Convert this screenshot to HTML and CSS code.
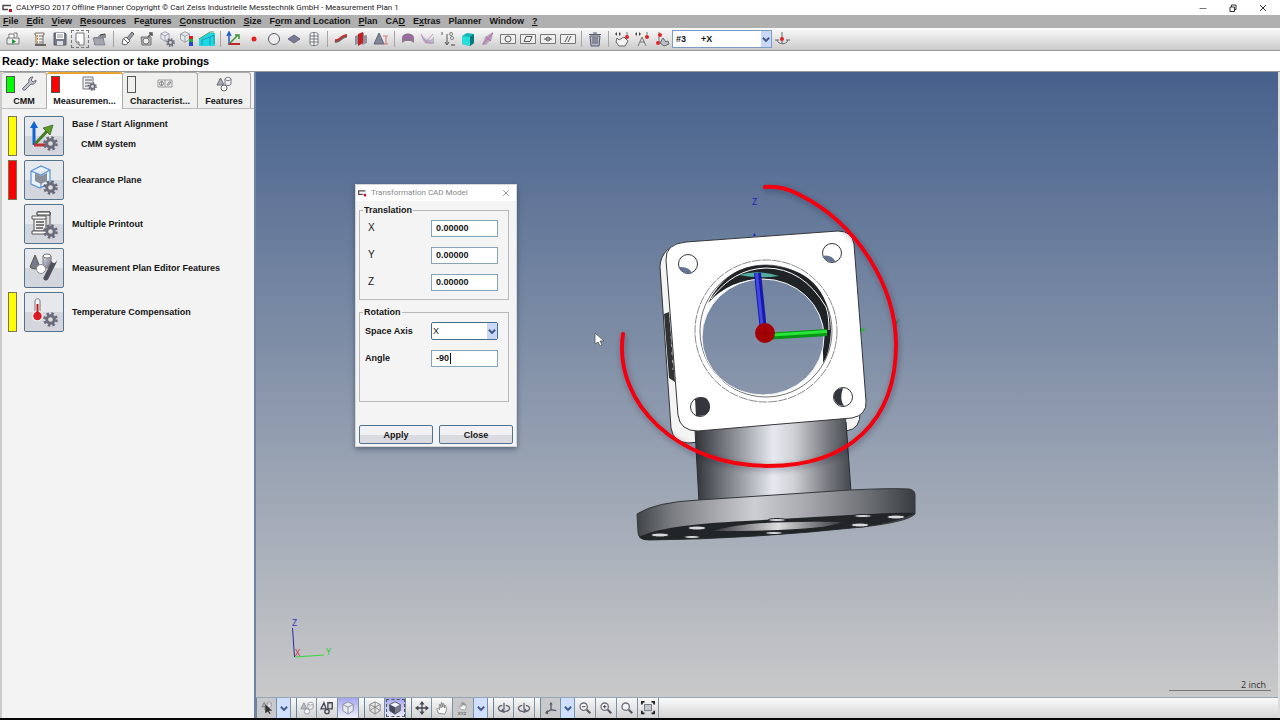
FILE: index.html
```html
<!DOCTYPE html>
<html lang="en">
<head>
<meta charset="utf-8">
<title>CALYPSO 2017 Offline Planner</title>
<link rel="stylesheet" href="styles.css">
</head>
<body>
<svg class="defs" aria-hidden="true">
  <defs>
    <linearGradient id="steel" x1="0" y1="0" x2="1" y2="1"><stop offset="0" stop-color="#dfe1ea"/><stop offset="1" stop-color="#686b7b"/></linearGradient>
    <symbol id="gear" viewBox="0 0 16 16"><circle cx="8" cy="8" r="6.300000" fill="none" stroke="#676a78" stroke-width="3" stroke-dasharray="2.6 2.35"/><circle cx="8" cy="8" r="4" fill="#ddd" stroke="#696c7b" stroke-width="3"/></symbol>
    <symbol id="shapes" viewBox="0 0 16 16"><path d="M4.500000 2L1 9h7z" fill="#a9acb8" stroke="#696b76"/><path d="M9 3v5c0 2 6 2 6 0V3" fill="#eee" stroke="#777a85"/><ellipse cx="12" cy="3" rx="3" ry="1.500000" fill="#fff" stroke="#777a85"/><circle cx="8" cy="12" r="3" fill="#fff" stroke="#666975"/></symbol>
    <symbol id="cube" viewBox="0 0 16 16"><path d="M8 1l6 3v7l-6 4-6-4V4z" fill="#e9e9f0" stroke="#858999"/><path d="M2 4l6 3 6-3M8 7v8" fill="none" stroke="#858999"/></symbol>
    <symbol id="solid" viewBox="0 0 16 16"><path d="M8 1l6 3-6 3-6-3z" fill="#f1f1f8"/><path d="M2 4l6 3v8l-6-4z" fill="#454957"/><path d="M14 4L8 7v8l6-4z" fill="#777b89"/><path d="M8 1l6 3v7l-6 4-6-4V4z" fill="none" stroke="#4a4d59"/></symbol>
    <symbol id="hand" viewBox="0 0 16 16"><path d="M4 14L2 9l1-1 2 2V4h1l1 4V2h1l1 5V3h1l1 5V5h1l1 3v3l-2 4z" fill="#f8f8f8" stroke="#777" stroke-width=".9"/></symbol>
    <symbol id="lens" viewBox="0 0 16 16"><circle cx="6.500000" cy="6.500000" r="4.200000" fill="#f5f5f9" stroke="#70717d" stroke-width="1.500000"/><path d="M10 10l4 4" stroke="#565762" stroke-width="2.500000"/></symbol>
    <symbol id="chev" viewBox="0 0 8 8"><path d="M1.500000 3L4 5.500000 6.500000 3" fill="none" stroke="#3c5488" stroke-width="1.500000"/></symbol>
    <symbol id="logo" viewBox="0 0 12 8"><path d="M10 1.500000H2v4h5" fill="none" stroke="#55454a" stroke-width="1.500000"/><rect x="8" y="5" width="3" height="3" fill="#c0102c"/></symbol>
  </defs>
</svg>

<header class="titlebar">
  <svg class="logo"><use href="#logo"/></svg>
  <h1 class="title">CALYPSO 2017 Offline Planner Copyright © Carl Zeiss Industrielle Messtechnik GmbH - Measurement Plan 1</h1>
  <div class="window-controls">
    <button class="plain" aria-label="Minimize"><svg viewBox="0 0 10 10"><path d="M1.500000 5.500000h7" stroke="#777"/></svg></button>
    <button class="plain" aria-label="Restore"><svg viewBox="0 0 10 10"><path d="M2 4h4.500000v4.500000H2zM3.500000 4V2H8v4.500000H6.500000" fill="none" stroke="#333"/></svg></button>
    <button class="plain" aria-label="Close window"><svg viewBox="0 0 10 10"><path d="M2 2l6 6M8 2L2 8" stroke="#333"/></svg></button>
  </div>
</header>

<nav class="menubar">
  <button class="plain menu"><u>F</u>ile</button><button class="plain menu"><u>E</u>dit</button><button class="plain menu"><u>V</u>iew</button><button class="plain menu"><u>R</u>esources</button><button class="plain menu">Fe<u>a</u>tures</button><button class="plain menu"><u>C</u>onstruction</button><button class="plain menu"><u>S</u>ize</button><button class="plain menu">F<u>o</u>rm and Location</button><button class="plain menu"><u>P</u>lan</button><button class="plain menu">CA<u>D</u></button><button class="plain menu">E<u>x</u>tras</button><button class="plain menu">Planner</button><button class="plain menu">Window</button><button class="plain menu"><u>?</u></button>
</nav>

<div class="toolbar">
  <button class="plain tool" aria-label="Run"><svg viewBox="0 0 16 16"><path d="M4 7V3h5v4M9 2h3v4" fill="#fff" stroke="#777"/><path d="M2 7h12v6H2z" fill="#eee" stroke="#777"/><path d="M7 8l4 2.500000L7 13z" fill="#159a2b"/></svg></button>
  <span class="sep blank"></span>
  <button class="plain tool" aria-label="Measurement plan"><svg viewBox="0 0 16 16"><path d="M3 2h9v2h-1v9H4V4H3z" fill="#f6f2ea" stroke="#76706c"/><path d="M3 14h11" stroke="#666" stroke-width="2"/><path d="M5 5h1M5 8h1M5 11h1" stroke="#e9861d" stroke-width="2"/><path d="M7 5h4M7 8h4M7 11h4" stroke="#777"/></svg></button>
  <button class="plain tool" aria-label="Save"><svg viewBox="0 0 16 16"><path d="M2 2h11l1 1v11H2z" fill="#74788b" stroke="#555969"/><path d="M4 2h8v6H4z" fill="#fafafa"/><path d="M5 4h6M5 6h6" stroke="#999"/><path d="M5 10h6v4H5z" fill="#ddd"/></svg></button>
  <button class="plain tool focus" aria-label="New"><svg viewBox="0 0 16 16"><path d="M4 2h8v12H7l-3-3z" fill="#fff" stroke="#777"/><path d="M4 11h3v3" fill="#ccc" stroke="#777"/></svg></button>
  <button class="plain tool" aria-label="Open"><svg viewBox="0 0 16 16"><path d="M2 6h4l1-2h5v10H2z" fill="#8c8f9a"/><path d="M1 7h10l2 7H3z" fill="#a2a5b0" stroke="#777a84" stroke-width=".7"/><path d="M8 4l5-1v4" fill="none" stroke="#333"/></svg></button>
  <span class="sep"></span>
  <button class="plain tool" aria-label="Probe"><svg viewBox="0 0 16 16"><path d="M8 7l5-6 2 2-5 6" fill="#a2a4ac" stroke="#5a5b64"/><path d="M4 8l3-2 4 4-4 4-4-1z" fill="#f7f7f7" stroke="#64666f"/><path d="M5 8l4 4" stroke="#666"/></svg></button>
  <button class="plain tool" aria-label="Folder probe"><svg viewBox="0 0 16 16"><path d="M2 6h10v8H3z" fill="#b0b1b9" stroke="#777"/><path d="M9 6l4-4M10 2h3v3" fill="none" stroke="#555" stroke-width="1.500000"/><circle cx="7" cy="10" r="3" fill="#eee" stroke="#777"/></svg></button>
  <button class="plain tool" aria-label="CAD settings"><svg viewBox="0 0 16 16"><use href="#cube" width="12" height="11"/><use href="#gear" x="7" y="7" width="9" height="9"/></svg></button>
  <button class="plain tool" aria-label="CAD colors"><svg viewBox="0 0 16 16"><use href="#cube" width="12" height="12"/><path d="M10 5h4v3h-4z" fill="#e21c1c"/><path d="M10 8h4v3h-4z" fill="#22a83a"/><path d="M10 11h4v4h-4z" fill="#2748d7"/></svg></button>
  <button class="plain tool" aria-label="Clearance"><svg viewBox="0 0 16 16"><path d="M0 8l10-6h6v13H0z" fill="#1dd9e6"/><path d="M3 14V9l8-3v8M11 6l4-2v9" fill="none" stroke="#2484a8" stroke-width=".8"/><path d="M0 8L11 1h4" fill="none" stroke="#35a055"/></svg></button>
  <span class="sep"></span>
  <button class="plain tool" aria-label="Base alignment"><svg viewBox="0 0 16 16"><path d="M3 14V2M1 5l2-4 2 4" fill="none" stroke="#235dca" stroke-width="1.500000"/><path d="M3 13L12 4M9 4h4v4" fill="none" stroke="#3d9436" stroke-width="1.500000"/><path d="M3 13h11" stroke="#c22626" stroke-width="2"/></svg></button>
  <button class="plain tool" aria-label="Point"><svg viewBox="0 0 16 16"><circle cx="8" cy="8" r="2.500000" fill="#e12323"/></svg></button>
  <button class="plain tool" aria-label="Circle"><svg viewBox="0 0 16 16"><circle cx="8" cy="8" r="5.500000" fill="#eee" stroke="#555863"/></svg></button>
  <button class="plain tool" aria-label="Plane"><svg viewBox="0 0 16 16"><path d="M8 4l6 4-6 4-6-4z" fill="#767a92" stroke="#656982"/></svg></button>
  <button class="plain tool" aria-label="Cylinder"><svg viewBox="0 0 16 16"><path d="M4 3v10c0 2 8 2 8 0V3c0-2-8-2-8 0zM4 5h8M4 8h8M4 11h8M8 2v12" fill="#f8f8f8" stroke="#696c75" stroke-width=".9"/></svg></button>
  <span class="sep"></span>
  <button class="plain tool" aria-label="Curve"><svg viewBox="0 0 16 16"><path d="M2 10c5 2 5-5 12-5" fill="none" stroke="#666" stroke-width="3"/><path d="M2 9c5 2 5-5 12-5" fill="none" stroke="#c8302f" stroke-width="2"/></svg></button>
  <button class="plain tool" aria-label="Section"><svg viewBox="0 0 16 16"><path d="M2 5l9-3v9l-9 3zM9 5l5-1v8l-5 2z" fill="#8f929e"/><path d="M5 3l5-2v11l-5 3z" fill="#c32023"/></svg></button>
  <button class="plain tool" aria-label="Cone angle"><svg viewBox="0 0 16 16"><path d="M6 2l5 11H1z" fill="#82869a" stroke="#62667b"/><path d="M10 5h5M13 5v8M10 13h5" stroke="#d87575"/></svg></button>
  <span class="sep"></span>
  <button class="plain tool" aria-label="Surface"><svg viewBox="0 0 16 16"><path d="M2 7c0-6 12-6 12 0v5l-3-2H5l-3 2z" fill="#8e7490"/><path d="M2 8c2-3 10-3 12 0" fill="none" stroke="#b75bbb"/></svg></button>
  <button class="plain tool" aria-label="Best fit"><svg viewBox="0 0 16 16"><path d="M2 4c0 11 9 9 12 8V5c-2 5-7 6-12-1z" fill="#b5b6c0"/><path d="M1 3c3 10 10 9 13 9M5 12l8-9" fill="none" stroke="#c673c9" stroke-width=".8"/></svg></button>
  <button class="plain tool" aria-label="Point pattern"><svg viewBox="0 0 16 16"><path d="M2 1v3M7 3v10M5 11l2 3 2-3" fill="none" stroke="#555"/><circle cx="11" cy="3" r="1.500000" fill="#fff" stroke="#777"/><circle cx="12" cy="7" r="1.500000" fill="#fff" stroke="#777"/><path d="M11 14h4" stroke="#444"/></svg></button>
  <button class="plain tool" aria-label="Block"><svg viewBox="0 0 16 16"><path d="M2 5l5-3 7 1v9l-4 3-8-2z" fill="#13b4b5"/><path d="M2 5l8 1v9l-8-2z" fill="#27ded9"/><path d="M10 6l4-3v9l-4 3z" fill="#07777b"/></svg></button>
  <button class="plain tool" aria-label="Freeform"><svg viewBox="0 0 16 16"><path d="M2 14l3-8 8-5-1 7-6 6z" fill="#b5a5b5"/><path d="M3 13l10-11M6 6l5 4" stroke="#bd60c0"/></svg></button>
  <button class="plain tool" aria-label="Roundness"><svg viewBox="0 0 16 16"><path d="M.5 3.500000h15v9H.5z" fill="#eee" stroke="#777"/><circle cx="8" cy="8" r="3" fill="none" stroke="#555"/></svg></button>
  <button class="plain tool" aria-label="Flatness"><svg viewBox="0 0 16 16"><path d="M.5 3.500000h15v9H.5z" fill="#eee" stroke="#777"/><path d="M6 5.500000h6l-2 5H4z" fill="none" stroke="#555"/></svg></button>
  <button class="plain tool" aria-label="Position"><svg viewBox="0 0 16 16"><path d="M.5 3.500000h15v9H.5z" fill="#eee" stroke="#777"/><circle cx="8" cy="8" r="2" fill="none" stroke="#555"/><path d="M4 8h8" stroke="#555"/></svg></button>
  <button class="plain tool" aria-label="Parallelism"><svg viewBox="0 0 16 16"><path d="M.5 3.500000h15v9H.5z" fill="#eee" stroke="#777"/><path d="M5 11l3-6M8 11l3-6" stroke="#555"/></svg></button>
  <span class="sep"></span>
  <button class="plain tool" aria-label="Delete"><svg viewBox="0 0 16 16"><path d="M3 5h10l-1 10H4z" fill="#b9bdcb" stroke="#53586a"/><path d="M2 3.500000h12M6 2h4M6 6v7M8 6v7M10 6v7" stroke="#53586a"/></svg></button>
  <span class="sep"></span>
  <button class="plain tool" aria-label="Manual probing"><svg viewBox="0 0 16 16"><path d="M3 1L1 3l2 2zM5 1l2 2-2 2z" fill="#444"/><path d="M3 7l2 2 5-3 4 4-3 5H5l-3-4z" fill="#f5f5f7" stroke="#666"/><path d="M13 1v5" stroke="#777"/><circle cx="13" cy="6" r="2" fill="#e22626"/></svg></button>
  <button class="plain tool" aria-label="Automatic probing"><svg viewBox="0 0 16 16"><path d="M3 1L1 3l2 2zM5 1l2 2-2 2z" fill="#444"/><path d="M4 15l4-9 4 9M6 11h5" fill="none" stroke="#777"/><path d="M13 1v5" stroke="#777"/><circle cx="13" cy="6" r="2" fill="#e22626"/></svg></button>
  <button class="plain tool" aria-label="Probe path"><svg viewBox="0 0 16 16"><path d="M5 1v4M5 5v7" fill="none" stroke="#777"/><path d="M6 12l3-5 3 4 2-1 1 3-5 2z" fill="#bcbec9" stroke="#666"/><circle cx="6" cy="4" r="2" fill="#e22626"/><circle cx="4" cy="12" r="2" fill="#e22626"/></svg></button>
  <span class="picker probe"><select aria-label="Probe direction"><option>#3 &nbsp; &nbsp; &nbsp;+X</option></select><svg class="arrow"><use href="#chev"/></svg></span>
  <button class="plain tool" aria-label="Probe ready"><svg viewBox="0 0 16 16"><path d="M3 9c1 5 10 5 11 0M1 9h4M12 9h4M8 1v12" fill="none" stroke="#666975"/><circle cx="8" cy="8" r="2" fill="#d22"/></svg></button>
</div>

<p class="status">Ready: Make selection or take probings</p>

<main class="main">
  <aside class="sidebar">
    <div class="tabs" role="tablist">
      <button class="tab cmm" role="tab"><span class="tab-icons"><i class="flag green"></i><svg viewBox="0 0 16 16"><path d="M2 12l6-6c-1-3 1-5 4-5l-2 3 2 2 3-2c0 3-2 5-5 4l-6 6c-2 1-3-1-2-2z" fill="#c1c3cc" stroke="#666a77"/></svg></span><span>CMM</span></button>
      <button class="tab measure active" role="tab" aria-selected="true"><span class="tab-icons"><i class="flag red"></i><svg viewBox="0 0 16 16"><path d="M2 1h10v12H2z" fill="#eee" stroke="#777b88"/><path d="M4 4h7M4 7h5M4 10h4" stroke="#555967"/><use href="#gear" x="7" y="6" width="9" height="9"/></svg></span><span>Measuremen...</span></button>
      <button class="tab char" role="tab"><span class="tab-icons"><i class="flag"></i><svg viewBox="0 0 16 16"><path d="M1 4h14v7H1zM8 4v7" fill="#eee" stroke="#999"/><circle cx="4.500000" cy="7.500000" r="2" fill="none" stroke="#888"/><path d="M4.500000 5v5M10 9h2l2-3h-2z" fill="none" stroke="#888"/></svg></span><span>Characterist...</span></button>
      <button class="tab feat" role="tab"><span class="tab-icons"><svg><use href="#shapes"/></svg></span><span>Features</span></button>
    </div>
    <ul class="plan">
      <li><i class="bar yellow"></i><button class="tile" aria-label="Base / Start Alignment"><svg viewBox="0 0 36 36"><path d="M8 27V8" stroke="#1264d2" stroke-width="3"/><path d="M4 10l4-7 4 7z" fill="#1264d2"/><path d="M9 26L23 11" stroke="#477b23" stroke-width="3"/><path d="M17 10l10-3-3 10z" fill="#5d9c27" stroke="#335918" stroke-width=".7"/><path d="M8 27h15" stroke="#bb3437" stroke-width="3"/><use href="#gear" x="17" y="18" width="15" height="15"/></svg></button><div class="two-lines"><span>Base / Start Alignment</span><span class="sub">CMM system</span></div></li>
      <li><i class="bar red"></i><button class="tile" aria-label="Clearance Plane"><svg viewBox="0 0 36 36"><path d="M5 9l10-5 9 4v13l-10 5-9-4zM5 9l10 4 9-5M15 13v12" fill="#e9f2fb" stroke="#5795d6" stroke-width="1.200000"/><path d="M9 11l6 3 6-3v8l-6 3-6-3z" fill="#8a8f9a"/><use href="#gear" x="17" y="18" width="15" height="15"/></svg></button><span>Clearance Plane</span></li>
      <li><i class="bar"></i><button class="tile" aria-label="Multiple Printout"><svg viewBox="0 0 36 36"><path d="M12 6h12v17H12z" fill="#ddd" stroke="#555"/><path d="M11 6h13v3H11z" fill="#fff" stroke="#333"/><path d="M8 12h12v13H8z" fill="#eee" stroke="#555"/><path d="M6 10h14v3H6zM6 25h16v3H6z" fill="#fff" stroke="#555"/><path d="M10 16h8M10 19h8M10 22h7" stroke="#555" stroke-width="1.500000"/><use href="#gear" x="17" y="18" width="15" height="15"/></svg></button><span>Multiple Printout</span></li>
      <li><i class="bar"></i><button class="tile" aria-label="Measurement Plan Editor Features"><svg viewBox="0 0 36 36"><path d="M9 5L4 17c3 3 8 2 10 0z" fill="#777b85" stroke="#555"/><path d="M17 6v10c2 3 7 2 8 0V6" fill="url(#steel)" stroke="#777"/><ellipse cx="21" cy="6" rx="4" ry="2" fill="#fff" stroke="#777"/><path d="M28 12L20 28" stroke="#4d505d" stroke-width="5" stroke-linecap="round"/><circle cx="28" cy="11" r="2" fill="#fff"/><circle cx="15" cy="19" r="4.500000" fill="#fff" stroke="#888"/></svg></button><span>Measurement Plan Editor Features</span></li>
      <li><i class="bar yellow"></i><button class="tile" aria-label="Temperature Compensation"><svg viewBox="0 0 36 36"><path d="M9 19V7c0-3 5-3 5 0v12" fill="#f5f5f5" stroke="#777"/><circle cx="11.500000" cy="22" r="5" fill="#da1c24" stroke="#eee" stroke-width="1.500000"/><path d="M11.500000 21V10" stroke="#cc151c" stroke-width="2"/><use href="#gear" x="17" y="18" width="15" height="15"/></svg></button><span>Temperature Compensation</span></li>
    </ul>
  </aside>

  <section class="viewer">
    <div class="canvas">
      <svg class="scene" viewBox="256 72 1022 625" role="img" aria-label="CAD model">
        <defs>
          <linearGradient id="sky" gradientUnits="userSpaceOnUse" x1="0" y1="72" x2="0" y2="697"><stop offset="0" stop-color="#46618c"/><stop offset="1" stop-color="#c9c9c9"/></linearGradient>
          <linearGradient id="neck"><stop offset="0" stop-color="#303338"/><stop offset=".15" stop-color="#666a70"/><stop offset=".5" stop-color="#e6e9ef"/><stop offset=".63" stop-color="#d0d2d7"/><stop offset=".85" stop-color="#777a80"/><stop offset="1" stop-color="#45484d"/></linearGradient>
          <linearGradient id="rim"><stop offset="0" stop-color="#404347"/><stop offset=".12" stop-color="#777a7e"/><stop offset=".42" stop-color="#cdced3"/><stop offset=".6" stop-color="#a9abb0"/><stop offset=".85" stop-color="#66696e"/><stop offset="1" stop-color="#393c40"/></linearGradient>
          <linearGradient id="bore"><stop offset="0" stop-color="#35373b"/><stop offset=".5" stop-color="#ddd"/><stop offset="1" stop-color="#35373b"/></linearGradient>
          <filter id="soft" x="-10%" y="-10%" width="120%" height="120%"><feDropShadow dx="1" dy="2" stdDeviation="3" flood-color="#101828" flood-opacity=".35"/></filter>
        </defs>
        <path d="M668 249Q660 257 660 267L671 428Q673 442 688 443L700 442V260zM845 418L860 412Q861 429 846 431z" fill="#f4f4f4" stroke="#333" stroke-width="1"/>
        <path d="M664 314L669 312L675 382L669 378z" fill="#303236"/><path d="M670 320L673 370" stroke="#aaa" stroke-dasharray="3 5"/>
        <path d="M695 426L846 418L851 494Q770 492 699 503z" fill="url(#neck)"/><path d="M695 430L699 502M846 422L851 492" stroke="#292c30"/>
        <path d="M637 514Q655 502 699 500L850 490Q890 488 909 489Q915 490 915 495V514Q907 522 862 527Q750 539 649 540Q638 540 638 532z" fill="url(#rim)" stroke="#34373a"/>
        <path d="M639 537Q661 525 745 521L850 515Q900 512 915 513Q900 522 862 527Q750 539 649 540Q641 540 639 537z" fill="#222528"/>
        <path d="M714 531Q745 520 842 522Q825 531 714 531z" fill="url(#bore)"/>
        <g fill="#d8d9dc" stroke="#222528"><ellipse cx="660" cy="535" rx="9" ry="2"/><ellipse cx="697" cy="528" rx="9" ry="2"/><ellipse cx="692" cy="537" rx="8" ry="1.500000"/><ellipse cx="777" cy="520" rx="9" ry="1.500000"/><ellipse cx="774" cy="533" rx="9" ry="1.500000"/><ellipse cx="863" cy="516" rx="9" ry="1.500000"/><ellipse cx="860" cy="525" rx="9" ry="2"/><ellipse cx="896" cy="517" rx="9" ry="2"/></g>
        <path d="M686 242L838 231Q852 231 854 244L866 401Q867 415 852 418L698 431Q680 431 678 415L666 260Q665 244 686 242z" fill="#fff" stroke="#34373a" stroke-width="1"/>
        <g fill="#fff" stroke="#34373a" stroke-width="1"><circle cx="688" cy="264" r="9.500000"/><circle cx="832" cy="253" r="9.500000"/><circle cx="843" cy="397" r="9.500000"/><circle cx="700" cy="407" r="9.500000"/></g>
        <path d="M679 267Q689 266 692 273Q683 275 679 267zM823 256Q831 254 836 262Q827 264 823 256z" fill="#647594"/>
        <path d="M695 399Q709 393 710 407Q709 417 696 416z" fill="#34363d"/><path d="M843 388Q833 389 834 398Q835 405 844 406Q839 399 843 388z" fill="#34363d"/>
        <circle cx="766" cy="331" r="71" fill="#fff" stroke="#55585c" stroke-width=".7" stroke-dasharray="9 1"/>
        <circle cx="766" cy="331" r="66" fill="#fff" stroke="#34373a" stroke-width=".7"/>
        <path d="M708 303Q727 265 765 265Q829 268 831 331Q830 353 823 363Q824 337 817 319Q800 282 765 279Q731 278 708 303z" fill="#202326"/>
        <ellipse cx="763" cy="337" rx="61" ry="58" fill="url(#sky)" stroke="#f7f7f7"/>
        <path d="M711 299Q733 269 766 268Q803 268 826 307Q829 315 829 330" fill="none" stroke="#fff" stroke-width="1"/>
        <path d="M739 275Q758 269 779 276Q758 279 739 275z" fill="#50aca1"/>
        <path d="M757.500000 273L763 326" stroke="#1719a9" stroke-width="7"/><path d="M756.500000 273L762 326" stroke="#4148e6" stroke-width="3"/>
        <path d="M772 336L827 332.500000" stroke="#079515" stroke-width="7"/><path d="M772 335L827 331.500000" stroke="#28e437" stroke-width="3"/>
        <circle cx="765" cy="333" r="10" fill="#a50005"/><path d="M765 325v17M757 333h16" stroke="#7b0004" stroke-width=".6"/>
        <path d="M754.500000 233l1.500000 3h-3z" fill="#2323c8"/><path d="M861 328l5 2-5 2z" fill="#20bc2c"/>
        <text class="axis-label" x="752" y="205" fill="#2020bf">Z</text><text class="axis-label" x="894" y="326" fill="#168d28">Y</text>
        <path d="M765 187C779 186 789 189 800 195C856 223 896 285 896 345C896 420 850 466 768 466C680 466 613 405 623 334" fill="none" stroke="#f20509" stroke-width="4" stroke-linecap="round" filter="url(#soft)"/>
        <path d="M595 333v11l3-2 2 4 2-1-2-4h4z" fill="#fff" stroke="#555" stroke-width=".8"/>
        <path d="M292.500000 628L294.500000 657" stroke="#2929a7"/><path d="M295 657L324 655" stroke="#36db3b"/>
        <g class="axis-label"><text x="292" y="626" fill="#3434b9">Z</text><text x="295" y="656" fill="#d03b3b">X</text><text x="326" y="655" fill="#2ac936">Y</text></g>
        <text class="scale-label" x="1241" y="688" fill="#333">2 inch</text><path d="M1169 690.500000h102" stroke="#777"/>
      </svg>
      <form class="dialog" onsubmit="return false">
        <div class="dialog-title"><svg class="logo"><use href="#logo"/></svg><h2>Transformation CAD Model</h2><button type="button" class="plain" aria-label="Close dialog"><svg viewBox="0 0 10 10"><path d="M1.500000 1.500000l7 7M8.500000 1.500000l-7 7" stroke="#777" stroke-width=".9"/></svg></button></div>
        <fieldset class="translation"><legend>Translation</legend>
          <div class="field axis"><label for="tx">X</label><input id="tx" value="0.00000"></div>
          <div class="field axis"><label for="ty">Y</label><input id="ty" value="0.00000"></div>
          <div class="field axis"><label for="tz">Z</label><input id="tz" value="0.00000"></div>
        </fieldset>
        <fieldset class="rotation"><legend>Rotation</legend>
          <div class="field"><label for="axis">Space Axis</label><span class="picker"><select id="axis"><option>X</option></select><svg class="arrow"><use href="#chev"/></svg></span></div>
          <div class="field"><label for="angle">Angle</label><span class="angle"><input id="angle" value="-90"><i class="caret"></i></span></div>
        </fieldset>
        <div class="actions"><button type="submit">Apply</button><button type="button">Close</button></div>
      </form>
    </div>
    <div class="viewbar">
      <div class="group"><button class="on" aria-label="Select"><svg viewBox="0 0 16 16"><use href="#shapes" width="15" height="12"/><path d="M6 4v10l3-2 2 3 1-1-2-3h4z" fill="#333"/></svg></button><button class="drop" aria-label="Selection options"><svg><use href="#chev"/></svg></button></div>
      <div class="group"><button aria-label="Features light"><svg opacity=".7"><use href="#shapes"/></svg></button><button aria-label="Features dark"><svg viewBox="0 0 16 16"><path d="M4.500000 2L1 9h6zM9 2h5v7H9z" fill="#ddd" stroke="#454853" stroke-width="1.500000"/><circle cx="8" cy="12" r="2.500000" fill="#ddd" stroke="#454853" stroke-width="1.500000"/></svg></button><button class="pressed" aria-label="CAD model"><svg><use href="#cube"/></svg></button></div>
      <div class="group"><button aria-label="Wireframe"><svg viewBox="0 0 16 16"><path d="M8 1l6 3v7l-6 4-6-4V4zM2 4l6 3 6-3M8 1v14M2 11l6-4 6 4" fill="none" stroke="#777" stroke-width=".9"/></svg></button><button class="pressed dash" aria-label="Shaded"><svg><use href="#solid"/></svg></button></div>
      <div class="group"><button aria-label="Move"><svg viewBox="0 0 16 16"><path d="M8 2v12M2 8h12" stroke="#444752" stroke-width="1.500000"/><path d="M8 0l3 4H5zM8 16l3-4H5zM0 8l4-3v6zM16 8l-4-3v6z" fill="#444752"/></svg></button><button aria-label="Pan"><svg><use href="#hand"/></svg></button><button class="on" aria-label="Rotate XYZ"><svg viewBox="0 0 16 16"><use href="#hand" x="2" width="12" height="11"/><text x="2" y="16" font-size="5" fill="#666">XYZ</text></svg></button><button class="drop" aria-label="Rotate options"><svg><use href="#chev"/></svg></button></div>
      <div class="group"><button aria-label="Rotate left"><svg viewBox="0 0 16 16"><path d="M6 5c-7 1-5 7 2 7s9-6 2-7M8 2v8" fill="none" stroke="#62646f" stroke-width="1.500000"/><path d="M7 8l-3 4 5 2z" fill="#62646f"/></svg></button><button aria-label="Rotate right"><svg viewBox="0 0 16 16"><path d="M10 5c7 1 5 7-2 7s-9-6-2-7M8 2v8" fill="none" stroke="#62646f" stroke-width="1.500000"/><path d="M9 8l3 4-5 2z" fill="#62646f"/></svg></button></div>
      <div class="group"><button class="on" aria-label="View axes"><svg viewBox="0 0 16 16"><path d="M8 3v7l-5 3M8 10l6 1" fill="none" stroke="#565966" stroke-width="1.500000"/><path d="M6 4l2-3 2 3zM4 10l-3 4 4 1z" fill="#565966"/></svg></button><button class="drop" aria-label="Axes options"><svg><use href="#chev"/></svg></button><button aria-label="Zoom out"><svg viewBox="0 0 16 16"><use href="#lens" width="16" height="16"/><path d="M4.500000 6.500000h4" stroke="#333"/></svg></button><button aria-label="Zoom in"><svg viewBox="0 0 16 16"><use href="#lens" width="16" height="16"/><path d="M4.500000 6.500000h4M6.500000 4.500000v4" stroke="#333"/></svg></button><button aria-label="Zoom area"><svg><use href="#lens"/></svg></button><button aria-label="Zoom to fit"><svg viewBox="0 0 16 16"><path d="M4 4h8v7H4z" fill="#c5c7cf" stroke="#6b6d78"/><path d="M1 4V1h3M12 1h3v3M15 11v3h-3M4 14H1v-3" fill="none" stroke="#222" stroke-width="2"/></svg></button></div>
    </div>
  </section>
</main>
</body>
</html>
```
FILE: styles.css
```css
* { box-sizing: border-box; }
body {
  margin: 0;
  height: 100vh;
  display: flex;
  flex-direction: column;
  overflow: hidden;
  border-bottom: 2px solid #050505;
  background: #fff;
  color: #151515;
  font: bold 9px/12px "Liberation Sans", Roboto, sans-serif;
}
button, input, select { font: inherit; color: inherit; margin: 0; }
button { padding: 0; }
h1, h2, p, ul { margin: 0; padding: 0; }
svg { display: block; width: 16px; height: 16px; }
.defs { position: absolute; width: 0; height: 0; }
.plain { border: 0; background: none; }
.logo { width: 12px; height: 8px; flex: none; }

.titlebar { display: flex; align-items: center; gap: 3px; height: 15px; padding-left: 1px; flex: none; }
.title { flex: 1; font: 8px/15px Roboto, "Noto Sans", sans-serif; color: #222; white-space: nowrap; }
.window-controls { display: flex; gap: 20px; padding-right: 12px; }
.window-controls svg { width: 10px; height: 10px; }

.menubar { display: flex; gap: 8px; height: 13px; padding-left: 3px; background: #b0b0b0; flex: none; }
.menu { line-height: 13px; white-space: nowrap; }

.toolbar { display: flex; align-items: center; height: 23px; padding-left: 3px; flex: none; background: linear-gradient(#fbfbfb, #cbcbcb); border-bottom: 1px solid #999; }
.tool { width: 20px; height: 20px; display: grid; place-items: center; flex: none; }
.focus { outline: 1px dashed #777; outline-offset: -2px; }
.sep { width: 7px; height: 16px; flex: none; background: linear-gradient(#a5a5a5, #a5a5a5) center / 1px 100% no-repeat; }
.blank { background: none; }
.picker { position: relative; display: block; height: 18px; border: 1px solid #7c9cc4; background: #fff; }
.picker select { display: block; appearance: none; width: 100%; height: 100%; border: 0; padding: 0 16px 0 3px; background: transparent; outline: 0; }
.picker .arrow { position: absolute; right: 0; top: 0; width: 10px; height: 100%; background: #c9d8f6; pointer-events: none; }
.probe { width: 100px; }

.status { height: 21px; padding: 0 2px; flex: none; font: bold 11px/20px "Liberation Sans", sans-serif; color: #000; border-bottom: 1px solid #999; }

.main { flex: 1; display: flex; min-height: 0; }
.sidebar { width: 254px; flex: none; background: #f3f3f3; border-left: 2px solid #ccc; }
.tabs { display: flex; height: 37px; padding-right: 3px; border-bottom: 1px solid #bbb; }
.tab { display: flex; flex-direction: column; align-items: center; gap: 2px; padding: 3px 4px 0; border: 1px solid #aaa; border-width: 1px 1px 0 0; border-radius: 3px 3px 0 0; background: #f0f0ee; white-space: nowrap; }
.cmm { width: 45px; }
.measure { width: 76px; }
.char { width: 75px; }
.feat { flex: 1; }
.active { background: #fff; border-top: 2px solid #e7a22f; padding-top: 2px; margin-bottom: -1px; }
.tab-icons { display: flex; align-items: flex-start; align-self: stretch; height: 17px; }
.tab-icons svg { width: 16px; height: 16px; margin: 0 auto; }
.flag { width: 9px; height: 17px; border: 1px solid #555; }
.green { background: #0f0; }
.red { background: #f00; }
.yellow { background: #ff0; }
.plan { list-style: none; display: grid; gap: 4px; padding: 7px 0 0 6px; }
.plan li { display: flex; align-items: center; height: 40px; white-space: nowrap; }
.bar { width: 9px; height: 40px; margin-right: 7px; }
.bar.red, .bar.yellow { border: 1px solid #775; }
.tile { width: 40px; height: 40px; margin-right: 8px; display: grid; place-items: center; border: 1px solid #54748e; border-radius: 2px; background: linear-gradient(#e7e8ec 0 50%, #d4d6de 50% 100%); }
.tile svg { width: 36px; height: 36px; }
.two-lines { display: grid; gap: 8px; align-self: start; padding-top: 2px; }
.sub { padding-left: 9px; }

.viewer { flex: 1; min-width: 0; display: flex; flex-direction: column; border-left: 2px solid #6f84a5; border-right: 2px solid #ddd; }
.canvas { position: relative; flex: 1; min-height: 0; background: linear-gradient(#46618c, #c9c9c9); }
.scene { width: 100%; height: 100%; }
.axis-label { font: 9px "Noto Sans", sans-serif; }
.scale-label { font: 9px "Open Sans", sans-serif; }

.dialog { position: absolute; left: 99px; top: 112px; width: 162px; padding-bottom: 2px; background: #f4f4f5; border: 1px solid #d5d7dc; box-shadow: 0 2px 5px #2348; }
.dialog-title { display: flex; align-items: center; gap: 4px; height: 16px; padding: 0 5px 0 1px; background: #fff; }
.dialog-title h2 { flex: 1; font: 8px/16px Roboto, sans-serif; color: #888; }
.dialog-title svg { width: 10px; height: 8px; }
fieldset { margin: 3px 7px 0 3px; padding: 0 10px 0 5px; border: 1px solid #b8b8b8; }
legend { padding: 0 1px; margin-left: -2px; }
.translation { height: 96px; }
.rotation { height: 96px; margin-top: 6px; }
.field { display: flex; align-items: center; justify-content: space-between; height: 18px; margin-top: 9px; }
.translation .field:first-of-type { margin-top: 3px; }
.axis label { padding-left: 3px; font-size: 10px; font-weight: 400; }
input { width: 67px; height: 17px; padding: 0 4px; border: 1px solid #87a3ba; background: #fff; outline: 0; }
.field .picker { width: 67px; border-color: #456c8f; border-radius: 2px; }
.rotation .field:first-of-type { margin-top: 4px; }
.rotation .field select { padding-left: 1px; font-weight: 400; }
.angle { position: relative; display: flex; }
.caret { position: absolute; left: 19px; top: 3px; width: 1px; height: 11px; background: #111; }
.actions { display: flex; gap: 6px; padding: 23px 3px 0; }
.actions button { flex: 1; height: 19px; border: 1px solid #527390; border-radius: 2px; background: linear-gradient(#f1f1f3 50%, #d9dbe1 50%); }

.viewbar { display: flex; gap: 5px; height: 21px; flex: none; background: linear-gradient(#fafafa, #d4d4d4); border-top: 1px solid #93a5b7; }
.group { display: flex; border-left: 1px solid #65859a; }
.group button { width: 21px; height: 20px; display: grid; place-items: center; border: 0; border-right: 1px solid #7893a6; background: linear-gradient(#f8f8f8, #d2d2d4); }
.group button:first-child { width: 20px; }
.group svg { width: 14px; height: 14px; }
.group .on { background: #c9c9cb; }
.group .pressed { background: linear-gradient(#a6a6ee, #eeeefa); }
.group .dash { outline: 1px dashed #555; outline-offset: -2px; }
.group .drop { width: 14px; background: #cfdffc; }
.group .drop svg { width: 10px; height: 10px; }
```
